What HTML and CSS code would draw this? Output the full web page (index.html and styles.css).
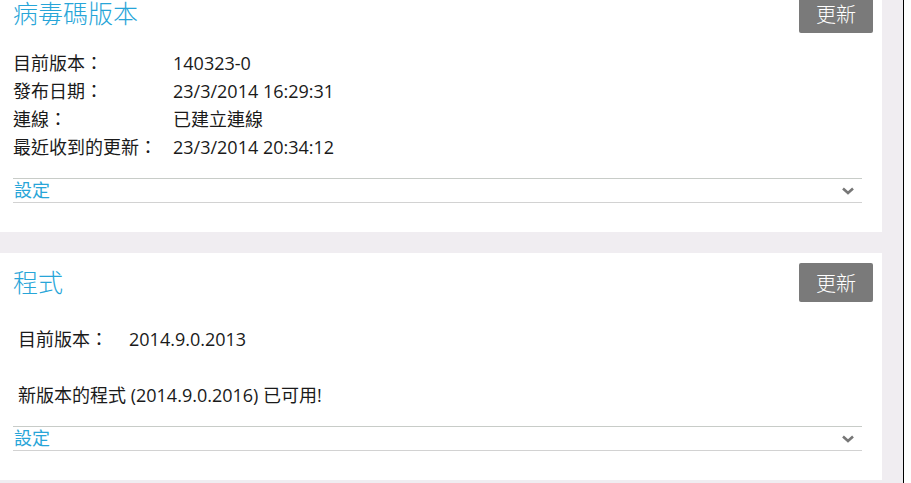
FILE: index.html
```html
<!DOCTYPE html>
<html lang="zh-Hant">
<head>
  <meta charset="UTF-8" />
  <title>更新</title>
  <meta name="viewport" content="width=device-width, initial-scale=1.0" />
  <link rel="stylesheet" href="styles.css">
</head>
<body>
  <div class="panel">
    <section class="card card-first">
      <div class="card-head">
        <h2>病毒碼版本</h2>
        <button class="btn">更新</button>
      </div>
      <div class="info">
        <span>目前版本：</span><span>140323-0</span>
        <span>發布日期：</span><span>23/3/2014 16:29:31</span>
        <span>連線：</span><span>已建立連線</span>
        <span>最近收到的更新：</span><span>23/3/2014 20:34:12</span>
      </div>
      <div class="settings">
        <span>設定</span>
        <svg width="12" height="8" viewBox="0 0 12 8"><path d="M1 1.5 L6 6 L11 1.5" fill="none" stroke="#777" stroke-width="2.6"/></svg>
      </div>
    </section>

    <section class="card">
      <div class="card-head">
        <h2>程式</h2>
        <button class="btn">更新</button>
      </div>
      <div class="info info-app">
        <span>目前版本：</span><span>2014.9.0.2013</span>
      </div>
      <p class="notice">新版本的程式 (2014.9.0.2016) 已可用!</p>
      <div class="settings">
        <span>設定</span>
        <svg width="12" height="8" viewBox="0 0 12 8"><path d="M1 1.5 L6 6 L11 1.5" fill="none" stroke="#777" stroke-width="2.6"/></svg>
      </div>
    </section>
  </div>
</body>
</html>
```

FILE: styles.css
```css
html, body { margin: 0; height: 100%; background: #fff; overflow: hidden; }
body { font-family: "Open Sans", "Noto Sans CJK TC", sans-serif; color: #1a1a1a; }

.panel {
  width: 903px; height: 483px; overflow: hidden;
  background: #f0edf1; border-right: 1px solid #000;
}

.card { width: 882px; box-sizing: border-box; background: #fff; padding: 10px 9px 29px 13px; }
.card + .card { margin-top: 21px; }
.card-first { margin-top: -16px; }

.card-head { display: flex; justify-content: space-between; align-items: center; height: 39px; }
.card-head h2 { margin: 0; font-size: 25px; line-height: 1; font-weight: 300; color: #27a5d8; }

.btn {
  width: 74px; height: 39px; border: none; border-radius: 2px;
  background: #7a7a7a; color: #fff; font-family: inherit; font-size: 20px; font-weight: 300; padding: 0;
}

.info { display: grid; grid-template-columns: 160px 1fr; margin-top: 16px; font-size: 18px; line-height: 28px; }
.info-app { grid-template-columns: 111px 1fr; margin-top: 23px; padding-left: 5px; }

.notice { margin: 28px 0 0; padding-left: 5px; font-size: 18px; line-height: 28px; }

.settings {
  display: flex; justify-content: space-between; align-items: center;
  margin: 17px 11px 0 0; height: 23px; padding-left: 1px;
  border-top: 1px solid #c8ccc8; border-bottom: 1px solid #d2d2d2;
  color: #27a5d8; font-size: 18px; line-height: 23px;
}
.settings svg { margin-right: 8px; }
```
